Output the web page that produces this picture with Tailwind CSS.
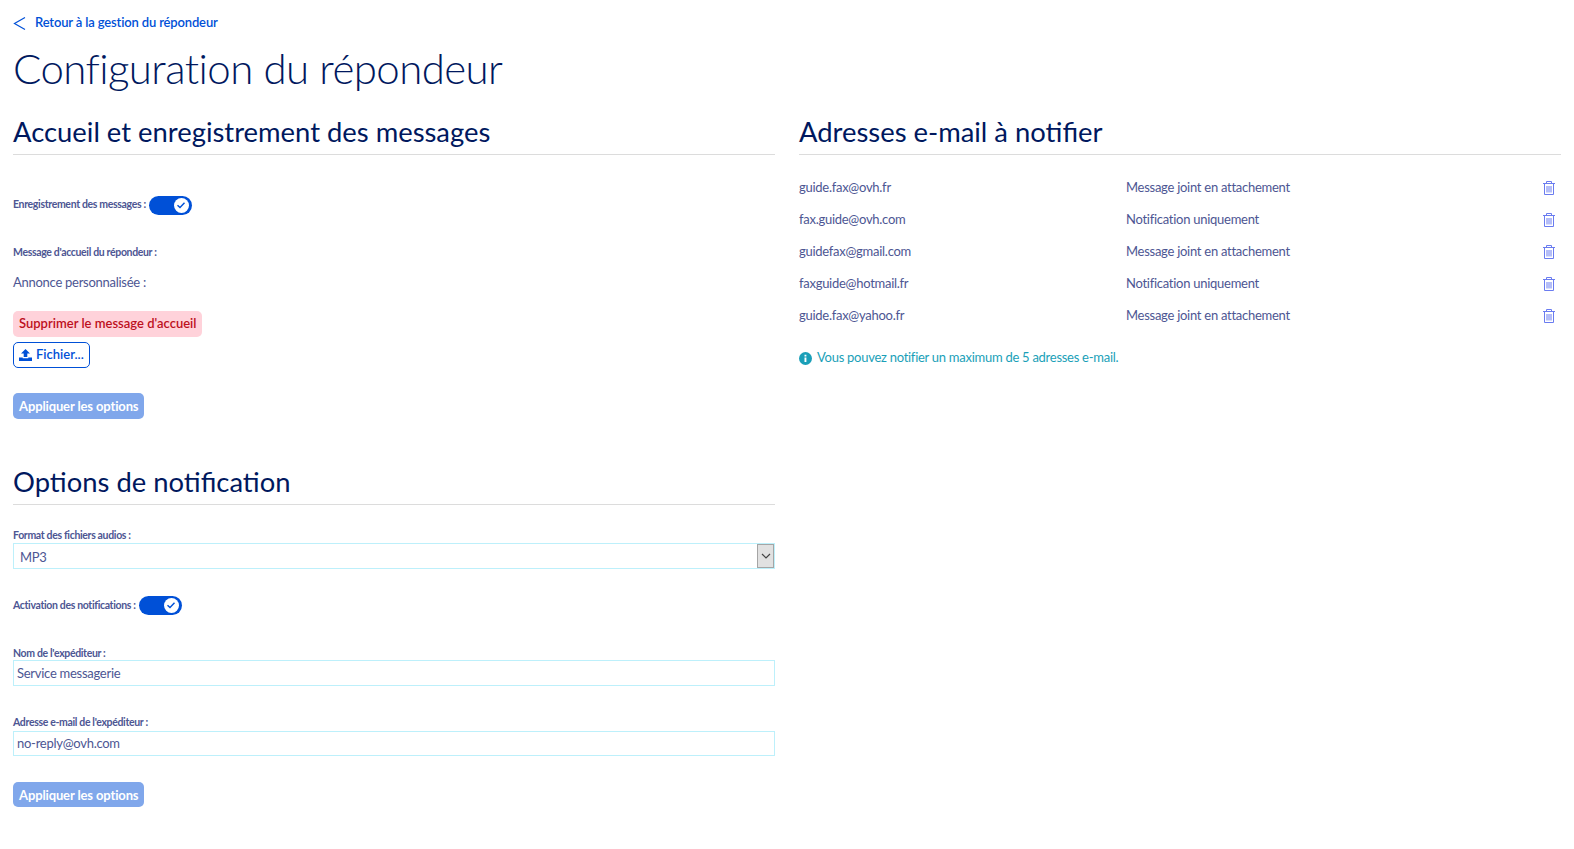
<!DOCTYPE html>
<html lang="fr">
<head>
  <meta charset="UTF-8" />
  <title>Configuration du répondeur</title>
  <script src="https://cdn.jsdelivr.net/npm/@tailwindcss/browser@4"></script>
</head>
<body class="bg-white font-['Lato','Noto_Sans',sans-serif] text-[#4d5693] text-[13px] tracking-[-0.27px] overflow-hidden">
<div class="h-[849px] pl-[13px] pt-[14px]">

  <a class="flex items-center h-[18px] text-[#0050d7] text-[13px] font-semibold tracking-[-0.15px]">
    <svg class="w-[13px] h-[15px] mr-[9px]" viewBox="0 0 13 15" fill="none" stroke="#0050d7" stroke-width="1.2"><path d="M12 1.5 1.5 7.5 12 13.5"/></svg>
    Retour à la gestion du répondeur
  </a>
  <h1 class="mt-[7px] h-[58px] leading-[58px] text-[42px] font-light text-[#00185e] tracking-[-0.58px]">Configuration du répondeur</h1>

  <div class="grid grid-cols-[762px_762px] gap-x-[24px] mt-[17px]">
    <!-- colonne gauche -->
    <div>
      <h2 class="h-[39px] leading-[36px] text-[27.4px] text-[#00185e] border-b border-[#dcdcdc] box-content pb-[1px] tracking-normal">Accueil et enregistrement des messages</h2>

      <div class="flex items-center gap-[3px] mt-[40px] h-[20px]">
        <span class="text-[10.5px] font-bold tracking-[-0.34px]">Enregistrement des messages :</span>
        <span class="relative w-[43px] h-[19px] rounded-full bg-[#0050d7]">
          <span class="absolute right-[3px] top-[2px] w-[15px] h-[15px] rounded-full bg-white flex items-center justify-center">
            <svg class="w-[10px] h-[10px]" viewBox="0 0 10 10" fill="none" stroke="#0050d7" stroke-width="1.4"><path d="M1.5 5.2 4 7.6 8.5 2.8"/></svg>
          </span>
        </span>
      </div>

      <p class="mt-[30px] h-[14px] leading-[14px] text-[10.5px] font-bold tracking-[-0.34px]">Message d'accueil du répondeur :</p>
      <p class="mt-[13px] h-[20px] leading-[20px]">Annonce personnalisée :</p>

      <button class="block mt-[19px] h-[26px] px-[6px] rounded-[5px] bg-[#ffd2da] text-[#bd1021] text-[13px] font-semibold tracking-normal">Supprimer le message d'accueil</button>
      <button class="flex items-center gap-[4px] mt-[5px] w-[77px] h-[26px] pl-[5px] rounded-[5px] border border-[#0050d7] text-[#0050d7] text-[13px] font-semibold tracking-normal">
        <svg class="w-[13px] h-[12px]" viewBox="0 0 13 12" fill="#0050d7"><path d="M6.5 0 11 4.4H8.3V8H4.7V4.4H2Z"/><path d="M0 8.5H3.7V9.3H9.3V8.5H13V12H0Z"/></svg>
        Fichier...
      </button>
      <button class="block mt-[25px] h-[26px] pt-[2px] px-[6px] rounded-[5px] bg-[#80a7eb] text-white text-[13px] font-bold tracking-[-0.13px]">Appliquer les options</button>

      <h2 class="mt-[45px] h-[39px] leading-[36px] text-[27.4px] text-[#00185e] border-b border-[#dcdcdc] box-content pb-[1px] tracking-normal">Options de notification</h2>

      <p class="mt-[23px] h-[14px] leading-[14px] text-[10.5px] font-bold tracking-[-0.34px]">Format des fichiers audios :</p>
      <div class="mt-[1px] h-[26px] flex items-center justify-between pl-[6px] border border-[#bdf0fb]">
        <span class="pt-[3px]">MP3</span>
        <span class="flex items-center justify-center w-[17px] h-[24px] bg-[#e1e1e1] border border-[#a5a5a5]">
          <svg class="w-[10px] h-[6px]" viewBox="0 0 10 6" fill="none" stroke="#444" stroke-width="1.2"><path d="M1 1 5 5 9 1"/></svg>
        </span>
      </div>

      <div class="flex items-center gap-[3px] mt-[26px] h-[20px]">
        <span class="pt-[1px] text-[10.5px] font-bold tracking-[-0.34px]">Activation des notifications :</span>
        <span class="relative w-[43px] h-[19px] rounded-full bg-[#0050d7]">
          <span class="absolute right-[3px] top-[2px] w-[15px] h-[15px] rounded-full bg-white flex items-center justify-center">
            <svg class="w-[10px] h-[10px]" viewBox="0 0 10 10" fill="none" stroke="#0050d7" stroke-width="1.4"><path d="M1.5 5.2 4 7.6 8.5 2.8"/></svg>
          </span>
        </span>
      </div>

      <p class="mt-[31px] h-[14px] leading-[14px] text-[10.5px] font-bold tracking-[-0.34px]">Nom de l'expéditeur :</p>
      <div class="h-[26px] flex items-center pt-[1px] pl-[3px] border border-[#bdf0fb]">Service messagerie</div>

      <p class="mt-[29px] h-[14px] leading-[14px] text-[10.5px] font-bold tracking-[-0.34px]">Adresse e-mail de l'expéditeur :</p>
      <div class="mt-[2px] h-[25px] flex items-center pl-[3px] border border-[#bdf0fb]">no-reply@ovh.com</div>

      <button class="block mt-[26px] h-[25px] pt-[2px] px-[6px] rounded-[5px] bg-[#80a7eb] text-white text-[13px] font-bold tracking-[-0.13px]">Appliquer les options</button>
    </div>

    <!-- colonne droite -->
    <div>
      <h2 class="h-[39px] leading-[36px] text-[27.4px] text-[#00185e] border-b border-[#dcdcdc] box-content pb-[1px] tracking-normal">Adresses e-mail à notifier</h2>

      <ul class="mt-[17px]">
        <li class="grid grid-cols-[327px_1fr_auto] items-center h-[32px] pr-[6px]"><span>guide.fax@ovh.fr</span><span>Message joint en attachement</span>
          <svg class="w-[12px] h-[14px]" viewBox="0 0 12 14" fill="none" stroke="#6a7cf0"><path d="M0 2.5H12M3.5 2.5V.5H8.5V2.5M1.5 2.5V13.5H10.5V2.5M4 5V11.5M6 5V11.5M8 5V11.5"/></svg></li>
        <li class="grid grid-cols-[327px_1fr_auto] items-center h-[32px] pr-[6px]"><span>fax.guide@ovh.com</span><span>Notification uniquement</span>
          <svg class="w-[12px] h-[14px]" viewBox="0 0 12 14" fill="none" stroke="#6a7cf0"><path d="M0 2.5H12M3.5 2.5V.5H8.5V2.5M1.5 2.5V13.5H10.5V2.5M4 5V11.5M6 5V11.5M8 5V11.5"/></svg></li>
        <li class="grid grid-cols-[327px_1fr_auto] items-center h-[32px] pr-[6px]"><span>guidefax@gmail.com</span><span>Message joint en attachement</span>
          <svg class="w-[12px] h-[14px]" viewBox="0 0 12 14" fill="none" stroke="#6a7cf0"><path d="M0 2.5H12M3.5 2.5V.5H8.5V2.5M1.5 2.5V13.5H10.5V2.5M4 5V11.5M6 5V11.5M8 5V11.5"/></svg></li>
        <li class="grid grid-cols-[327px_1fr_auto] items-center h-[32px] pr-[6px]"><span>faxguide@hotmail.fr</span><span>Notification uniquement</span>
          <svg class="w-[12px] h-[14px]" viewBox="0 0 12 14" fill="none" stroke="#6a7cf0"><path d="M0 2.5H12M3.5 2.5V.5H8.5V2.5M1.5 2.5V13.5H10.5V2.5M4 5V11.5M6 5V11.5M8 5V11.5"/></svg></li>
        <li class="grid grid-cols-[327px_1fr_auto] items-center h-[32px] pr-[6px]"><span>guide.fax@yahoo.fr</span><span>Message joint en attachement</span>
          <svg class="w-[12px] h-[14px]" viewBox="0 0 12 14" fill="none" stroke="#6a7cf0"><path d="M0 2.5H12M3.5 2.5V.5H8.5V2.5M1.5 2.5V13.5H10.5V2.5M4 5V11.5M6 5V11.5M8 5V11.5"/></svg></li>
      </ul>

      <p class="flex items-center gap-[5px] mt-[16px] h-[20px] text-[#1a9fb8]">
        <svg class="w-[13px] h-[13px]" viewBox="0 0 13 13"><circle cx="6.5" cy="6.5" r="6.5" fill="#1a9fb8"/><path d="M5.5 5.5H7.4V10H5.5ZM5.5 2.8H7.4V4.5H5.5Z" fill="#fff"/></svg>
        Vous pouvez notifier un maximum de 5 adresses e-mail.
      </p>
    </div>
  </div>
</div>
</body>
</html>
